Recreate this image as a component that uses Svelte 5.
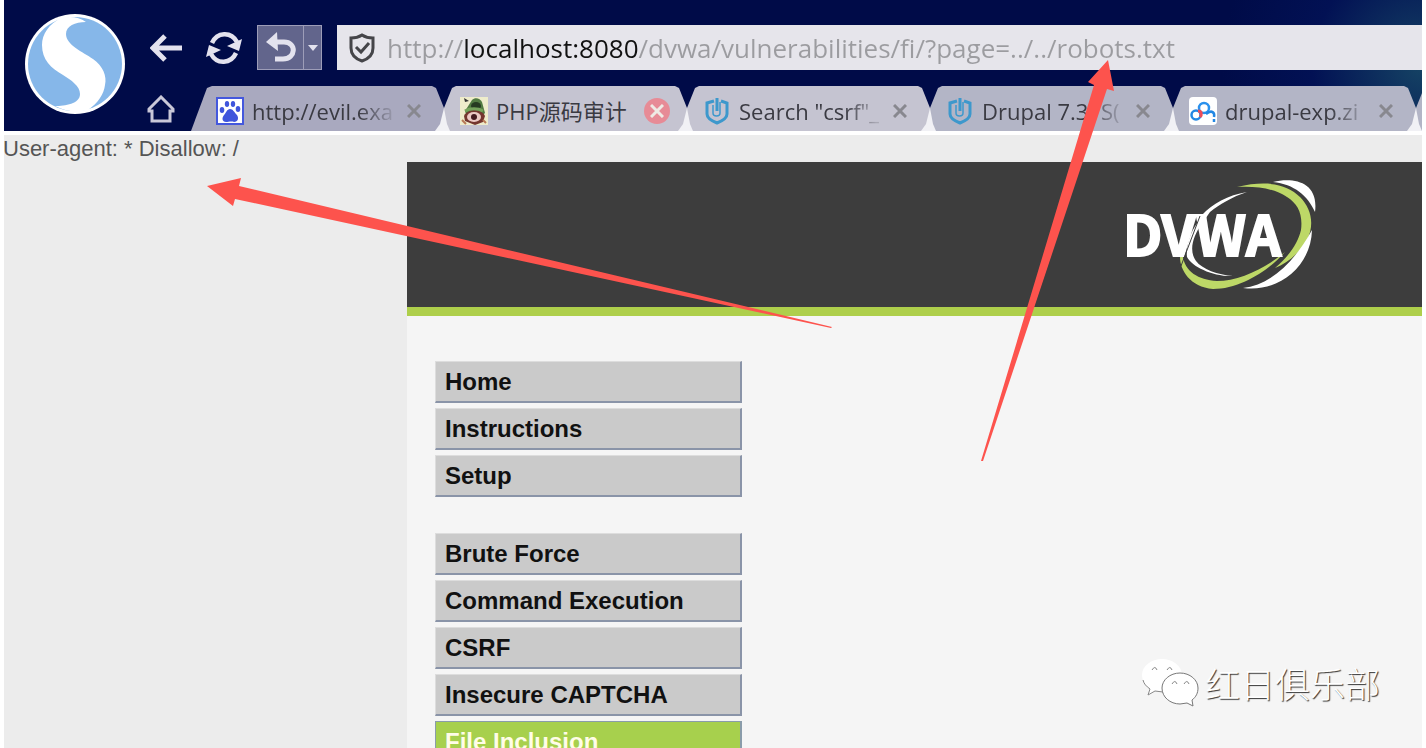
<script>
  const url = 'http://localhost:8080/dvwa/vulnerabilities/fi/?page=../../robots.txt';
  const tabs = [
    { icon: 'paw', title: 'http://evil.exa', tone: 'dim' },
    { icon: 'frog', title: 'PHP源码审计', tone: 'plain', hot: true },
    { icon: 'shield', title: 'Search "csrf"_', tone: 'plain' },
    { icon: 'shield', title: 'Drupal 7.31S(', tone: 'mid' },
    { icon: 'cloud', title: 'drupal-exp.zi', tone: 'mid' }
  ];
  const menu = [
    ['Home', 'Instructions', 'Setup'],
    ['Brute Force', 'Command Execution', 'CSRF', 'Insecure CAPTCHA', 'File Inclusion']
  ];
  const current = 'File Inclusion';
</script>

<div class="window">
  <header class="chrome">
    <svg class="brand" viewBox="0 0 100 100" role="img" aria-label="Browser">
      <circle cx="50" cy="50" r="50" fill="#fff" />
      <circle cx="50" cy="50" r="47" fill="#86b7e9" />
      <path d="M61 8C50 8 41 12 41 20c0 11 17 18 27 25 10 7 14 17 12 26-1 9-7 18-17 25-13 3-23 1-33-4 10 0 25-2 25-12 0-8-9-14-17-19C26 54 17 46 17 31 17 20 24 10 36 4c10-2 18-1 25 4Z" fill="#fff" />
    </svg>
    <div class="rows">
      <div class="toolbar">
        <button class="tool" aria-label="Back">
          <svg width="32" height="32" viewBox="0 0 32 32"><path d="M15 4 3 16l12 12M4 16h28" fill="none" stroke="#e3e2ee" stroke-width="5" /></svg>
        </button>
        <button class="tool" aria-label="Reload">
          <svg width="38" height="34" viewBox="0 0 38 34"><g fill="none" stroke="#e3e2ee" stroke-width="4.500"><path d="M7 12C12 1 26 0 32 11" /><path d="M31 22C26 33 12 34 6 23" /></g><path d="m37 8-3 12-12-5ZM1 26l3-12 12 5Z" fill="#e3e2ee" /></svg>
        </button>
        <div class="undo">
          <button aria-label="Undo"><svg width="34" height="32" viewBox="0 0 34 32"><path d="M6 10h14c13 0 12 17-1 17h-8" fill="none" stroke="#e3e2ee" stroke-width="5" /><path d="m13 0 1 19L2 10Z" fill="#e3e2ee" /></svg></button>
          <button class="more" aria-label="More"><svg width="10" height="6" viewBox="0 0 10 6"><path d="M0 0h10L5 6Z" fill="#e3e2ee" /></svg></button>
        </div>
        <div class="address">
          <svg width="26" height="30" viewBox="0 0 26 30" fill="none" stroke="#454549"><path d="M13 2c3 2 7 3 11 3v10c0 7-5 11-11 13C7 26 2 22 2 15V5c4 0 8-1 11-3Z" stroke-width="3" /><path d="m7 14 5 5 8-9" stroke-width="3" /></svg>
          <input aria-label="Address" value={url} spellcheck="false" />
        </div>
      </div>
      <div class="tabbar">
        <button class="home" aria-label="Home page">
          <svg width="30" height="28" viewBox="0 0 30 28"><path d="M15 2 3 14v2h3v10h18V16h3v-2Z" fill="none" stroke="#c9c8d8" stroke-width="3" /></svg>
        </button>
        <div class="tabs">
          {#each tabs as tab}
            <div class="tab {tab.tone}">
              <span class="icon">
                {#if tab.icon === 'paw'}
                  <svg viewBox="0 0 28 28"><rect x="1" y="1" width="26" height="26" fill="#fff" stroke="#4458dd" stroke-width="2" /><g fill="#3f55dc"><ellipse cx="6" cy="13" rx="2.300" ry="3" /><ellipse cx="11" cy="7" rx="2.200" ry="3" /><ellipse cx="17" cy="7" rx="2.200" ry="3" /><ellipse cx="22" cy="12" rx="2.300" ry="3" /><path d="M14 12c-3 0-4 4-6 6-3 4-1 7 2 7 2 0 6-1 8 0 4 0 5-4 3-7-3-3-4-6-7-6Z" /></g></svg>
                {:else if tab.icon === 'frog'}
                  <svg viewBox="0 0 28 28"><rect width="28" height="28" fill="#eeeccb" /><path d="M4 1 9 4 5 5Z" fill="#333" /><path d="M12 3c3-3 8-2 10 2l3 11-4 4H7L5 14Z" fill="#527b42" /><ellipse cx="16" cy="9" rx="5" ry="4" fill="#263b21" /><path d="M4 19c3-7 17-8 21 0l-2 6-8 3-10-4Z" fill="#74362f" /><ellipse cx="14" cy="20" rx="7" ry="5" fill="#ecc9c4" /><circle cx="14" cy="20" r="3" fill="#451a20" /><path d="M5 14c5-3 13-3 18 0" fill="none" stroke="#75a35b" stroke-width="3" /><path d="m2 23 4 4M23 23l3 3" stroke="#b87955" stroke-width="2" /></svg>
                {:else if tab.icon === 'shield'}
                  <svg viewBox="0 0 28 28" fill="none" stroke="#3d98cc" stroke-width="3"><path d="m11 4-7 2v11c0 4 5 7 10 9 5-2 10-5 10-9V6l-6-2" /><path d="M10 8v8c0 4 7 4 7 0V5" stroke-width="1.500" /><path d="M14 1v13" /></svg>
                {:else}
                  <svg viewBox="0 0 28 28" fill="none"><rect width="28" height="28" rx="4" fill="#fff" /><circle cx="15" cy="11" r="5" stroke="#2a91ed" stroke-width="2.500" /><circle cx="7" cy="18" r="4.500" stroke="#2387e3" stroke-width="2.500" /><path d="M17 17c6-5 9-1 8 3M25 22v3" stroke="#2387e3" stroke-width="2.500" /><path d="M9 14c4 0 4 4 2 6" stroke="#ed4d59" stroke-width="3" /></svg>
                {/if}
              </span>
              <span class="title">{tab.title}</span>
              <button class="close" class:hot={tab.hot} aria-label="Close tab">
                <svg width="14" height="14" viewBox="0 0 14 14"><path d="m1 1 12 12M13 1 1 13" stroke="currentColor" stroke-width="3" /></svg>
              </button>
            </div>
          {/each}
          <div class="tab mid next"></div>
        </div>
      </div>
    </div>
  </header>

  <main>
    <p class="output">User-agent: * Disallow: /</p>
    <div class="site">
      <div class="banner">
        <svg width="196" height="118" viewBox="0 0 196 118" role="img" aria-label="DVWA">
          <path d="M123 18C104 21 88 30 78 41L74 48C64 61 62 76 63 83 68 93 90 103 109 102 94 101 78 95 72 87 64 76 70 61 77 51L86 38C96 30 108 23 123 18Z" fill="#fff" />
          <path d="M56 83C56 96 66 113 89 115 117 115 145 96 161 78 142 94 115 107 93 107 74 106 61 97 59 83Z" fill="#bdd867" />
          <path d="M113 13C143 6 163 10 176 23 187 34 191 50 183 66 175 80 163 89 151 94 166 81 174 69 177 56 179 40 174 30 163 23 149 14 132 12 113 13Z" fill="#bdd867" />
          <path d="M149 8C170 3 195 8 191 38 184 22 170 10 149 8ZM188 56C187 93 154 119 119 114 144 111 168 92 188 56Z" fill="#fff" />
          <text x="-1" y="82">DVWA</text>
          <path d="m76 42-19 50" stroke="#3d3d3d" stroke-width="1" />
        </svg>
      </div>
      <nav aria-label="DVWA">
        {#each menu as group}
          <ul>
            {#each group as item}
              <li><a href="#{item}" class:current={item === current}>{item}</a></li>
            {/each}
          </ul>
        {/each}
      </nav>
    </div>
  </main>

  <svg class="arrows" width="1426" height="748" viewBox="0 0 1426 748" fill="#fd534d" aria-hidden="true">
    <path d="M207 186 241 178 239 186 832 327 831 328 235 199 233 206Z" />
    <path d="M1108 60 1114 91 1107 89 983 461 981 461 1094 85 1088 82Z" />
  </svg>

  <div class="mark">
    <svg width="58" height="52" viewBox="0 0 58 52" fill="#fff" aria-hidden="true"><path d="M21 2c11 0 20 7 20 16S32 35 21 35l-7-1-7 4 2-7C4 28 1 23 1 18 1 9 10 2 21 2Z" /><path d="M2 23c1 4 3 6 7 9l-2 6 7-4 8 1" fill="none" stroke="#888" /><path d="M39 16c10 0 18 7 18 15 0 5-2 9-6 12l1 6-6-3-7 1c-10 0-18-7-18-16 0-8 8-15 18-15Z" stroke="#777" /><path d="M11 13q3-5 5 0M26 13q3-5 5 0M31 27q3-5 5 0M43 27q3-5 5 0" fill="none" stroke="#888" /></svg>
    <span>红日俱乐部</span>
  </div>
</div>

<style>
  :global(body) { margin: 0; background: #fff; overflow: hidden; }
  .window { position: relative; box-sizing: border-box; height: 100vh; padding: 0 4px; display: flex; flex-direction: column; overflow: hidden; font-family: "Liberation Sans", Arial, sans-serif; }
  button { border: 0; padding: 0; background: none; display: flex; align-items: center; justify-content: center; }
  svg { display: block; flex: none; }
  .chrome { display: flex; flex: none; height: 131px; background: radial-gradient(circle at 100% 50%, #154364 0, #021154 110px, #000b48 200px); border-bottom: 4px solid #fff; }
  .brand { width: 100px; height: 100px; margin: 14px 16px 0 21px; }
  .rows { flex: 1; min-width: 0; display: flex; flex-direction: column; justify-content: space-between; padding-top: 25px; }
  .toolbar { display: flex; align-items: center; height: 45px; }
  .tool { width: 58px; height: 45px; padding-right: 8px; box-sizing: border-box; }
  .undo { display: flex; box-sizing: border-box; width: 65px; height: 45px; border: 1px solid #9d9db8; background: #62658c; margin-right: 15px; }
  .undo button { flex: 1; }
  .undo .more { flex: 0 0 18px; border-left: 1px solid #9d9db8; }
  .address { flex: 1; min-width: 0; height: 45px; display: flex; align-items: center; gap: 12px; padding-left: 12px; background: #e6e5eb; }
  input { flex: 1; min-width: 0; padding: 0; border: 0; outline: 0; height: 40px; font: 26px "Open Sans", "Noto Sans", sans-serif; color: transparent; background: linear-gradient(90deg, #9c9ca0 77px, #111 77px, #111 251px, #9c9ca0 251px); background-clip: text; -webkit-background-clip: text; }
  .tabbar { display: flex; align-items: flex-end; height: 45px; }
  .home { width: 40px; height: 44px; flex: none; box-sizing: border-box; }
  .tabs { flex: 1; min-width: 0; display: flex; overflow: hidden; margin-left: 10px; background: linear-gradient(#f1f1f5, #f1f1f5) 40px 22px no-repeat; }
  .tab { flex: none; box-sizing: border-box; width: 243px; height: 45px; padding: 4px 17px 0 16px; display: flex; align-items: center; gap: 8px; clip-path: polygon(8px 2px, 12px 0, calc(100% - 12px) 0, calc(100% - 8px) 2px, 100% 22px, calc(100% - 4px) 38px, calc(100% - 9px) 100%, 6px 100%, 3px 38px, 0 22px); color: #3a3a42; background: #c5c4d1; }
  .tab:first-child { width: 253px; padding-left: 25px; clip-path: polygon(16px 2px, 21px 0, calc(100% - 12px) 0, calc(100% - 8px) 2px, 100% 22px, calc(100% - 4px) 38px, calc(100% - 9px) 100%, 0 100%); }
  .tab.dim { background: #a9a9bf; }
  .tab.mid { background: #b3b5c6; }
  .icon { width: 28px; height: 28px; flex: none; }
  .title { flex: 1; min-width: 0; white-space: nowrap; font: 22px/36px "Open Sans", "Noto Sans CJK SC", sans-serif; mask-image: linear-gradient(90deg, #000 75%, #0003 98%); }
  .tab:nth-child(2) .title { mask-image: none; }
  .close { flex: none; width: 26px; height: 26px; color: #88888f; border-radius: 13px; }
  .close.hot { background: #e78b96; color: #eeeae4; }
  main { flex: 1; min-height: 0; background: #ececec; overflow: hidden; }
  .output { margin: 0; height: 27px; font-size: 22px; line-height: 28px; color: #555; text-indent: -1px; }
  .site { margin-left: 403px; height: 100%; background: #f5f5f5; }
  .banner { display: flex; justify-content: flex-end; box-sizing: border-box; height: 154px; padding: 12px 102px 0 0; background: #3d3d3d; border-bottom: 9px solid #aecf4b; }
  .banner text { font: 700 55px "Noto Sans CJK SC", sans-serif; fill: #fff; stroke: #fff; stroke-width: 2px; }
  nav { width: 307px; padding: 45px 0 0 28px; }
  ul { list-style: none; margin: 0 0 36px; padding: 0; display: flex; flex-direction: column; gap: 5px; }
  a { display: block; box-sizing: border-box; height: 42px; padding-left: 9px; border: 1px solid #ddd; border-right: 2px solid #8a94a8; border-bottom: 2px solid #8a94a8; background: #cacaca; color: #111; font-size: 24px; font-weight: 700; line-height: 40px; text-decoration: none; }
  a.current { background: #a7d04d; border-color: #8a9caa; color: #fffde8; }
  .arrows { position: absolute; left: 0; top: 0; }
  .mark { position: absolute; right: 46px; bottom: 39px; display: flex; align-items: center; gap: 6px; font: 300 35px/52px "Noto Sans CJK SC", sans-serif; color: #fff; text-shadow: 1px 1px 1px #333; }
</style>
